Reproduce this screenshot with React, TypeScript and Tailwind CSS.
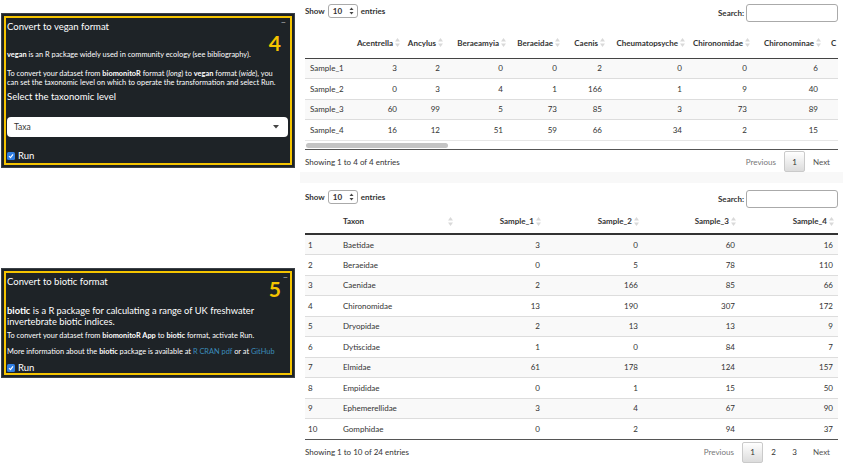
import React from 'react';

const SortIcon = () => (
  <svg width="5" height="9" viewBox="0 0 5 9" className="shrink-0">
    <path d="M2.5 0 L5 3.5 L0 3.5 Z" fill="#d9d9d9" />
    <path d="M0 5.5 L5 5.5 L2.5 9 Z" fill="#d9d9d9" />
  </svg>
);

const Checked = () => (
  <span className="w-[8px] h-[8px] rounded-[1.5px] bg-[#2f7de1] flex items-center justify-center shrink-0">
    <svg width="6" height="6" viewBox="0 0 6 6">
      <path d="M1 3.1 L2.5 4.6 L5 1.4" stroke="white" strokeWidth="1.2" fill="none" />
    </svg>
  </span>
);

const Toolbar = () => (
  <div className="flex justify-between items-start text-[8px] text-[#333]">
    <div className="flex items-center h-[14px] gap-[3px] font-bold">
      <span>Show</span>
      <span className="w-[30px] h-[14px] border border-[#aaa] rounded-[3px] flex items-center justify-between pl-[4px] pr-[3px] bg-white">
        <span>10</span>
        <svg width="5" height="8" viewBox="0 0 5 8">
          <path d="M2.5 0.5 L4.5 3 L0.5 3 Z" fill="#444" />
          <path d="M0.5 5 L4.5 5 L2.5 7.5 Z" fill="#444" />
        </svg>
      </span>
      <span>entries</span>
    </div>
    <div className="flex items-center gap-[2px]">
      <span className="font-bold">Search:</span>
      <span className="w-[92px] h-[18px] border border-[#aaa] rounded-[3px] bg-white" />
    </div>
  </div>
);

const Pager = ({ pages }: { pages: number }) => (
  <div className="flex items-center text-[8px] text-[#555]">
    <span className="px-[8px] text-[#777]">Previous</span>
    <span className="w-[21px] h-[21px] flex items-center justify-center border border-[#cacaca] rounded-[2px] bg-gradient-to-b from-white to-[#dcdcdc] text-[#333]">1</span>
    {pages > 1 && <span className="w-[21px] text-center text-[#333]">2</span>}
    {pages > 2 && <span className="w-[21px] text-center text-[#333]">3</span>}
    <span className="px-[8px]">Next</span>
  </div>
);

const taxaCols = [
  { name: '', w: 'w-[43px]' },
  { name: 'Acentrella', w: 'w-[54px]' },
  { name: 'Ancylus', w: 'w-[43px]' },
  { name: 'Beraeamyia', w: 'w-[63px]' },
  { name: 'Beraeidae', w: 'w-[54px]' },
  { name: 'Caenis', w: 'w-[45px]' },
  { name: 'Cheumatopsyche', w: 'w-[80px]' },
  { name: 'Chironomidae', w: 'w-[65px]' },
  { name: 'Chironominae', w: 'w-[71px]' },
];

const veganRows = [
  ['Sample_1', 3, 2, 0, 0, 2, 0, 0, 6],
  ['Sample_2', 0, 3, 4, 1, 166, 1, 9, 40],
  ['Sample_3', 60, 99, 5, 73, 85, 3, 73, 89],
  ['Sample_4', 16, 12, 51, 59, 66, 34, 2, 15],
];

const bioticCols = [
  { name: '', w: 'w-[33px]' },
  { name: 'Taxon', w: 'w-[119px]' },
  { name: 'Sample_1', w: 'w-[88px]' },
  { name: 'Sample_2', w: 'w-[98px]' },
  { name: 'Sample_3', w: 'w-[97px]' },
  { name: 'Sample_4', w: 'w-[98px]' },
];

const bioticRows: [string, number, number, number, number][] = [
  ['Baetidae', 3, 0, 60, 16],
  ['Beraeidae', 0, 5, 78, 110],
  ['Caenidae', 2, 166, 85, 66],
  ['Chironomidae', 13, 190, 307, 172],
  ['Dryopidae', 2, 13, 13, 9],
  ['Dytiscidae', 1, 0, 84, 7],
  ['Elmidae', 61, 178, 124, 157],
  ['Empididae', 0, 1, 15, 50],
  ['Ephemerellidae', 3, 4, 67, 90],
  ['Gomphidae', 0, 2, 94, 37],
];

export default function App() {
  return (
    <div className="flex w-[843px] h-[463px] overflow-hidden bg-white font-['Lato',sans-serif]">
      {/* left: option boxes */}
      <div className="w-[300px] shrink-0 pl-[1px] pt-[13px]">
        <div className="w-[294px] h-[155px] bg-[#1e2327] border border-[#3b4046] p-[2px]">
          <div className="relative h-full border-2 border-[#f5c400] pl-[1px] pr-[2px] text-white">
            <span className="absolute top-[1px] right-[4px] text-[9px] leading-[8px] text-[#aaa]">−</span>
            <span className="absolute top-[14px] right-[9px] text-[21px] leading-[21px] font-bold text-[#f5c400]">4</span>
            <div className="mt-[3px] text-[9.5px] leading-[12px]">Convert to vegan format</div>
            <p className="mt-[17px] text-[7.4px] leading-[10px]">
              <b>vegan</b> is an R package widely used in community ecology (see bibliography).
            </p>
            <p className="mt-[10px] text-[7.4px] leading-[8.5px]">
              To convert your dataset from <b>biomonitoR</b> format (<i>long</i>) to <b>vegan</b> format (<i>wide</i>), you
              <br />
              can set the taxonomic level on which to operate the transformation and select Run.
            </p>
            <div className="mt-[4px] text-[9.5px] leading-[12px]">Select the taxonomic level</div>
            <div className="mt-[14px] h-[20px] bg-white rounded-[4px] flex items-center justify-between pl-[7px] pr-[9px] text-[#333] text-[8.5px]">
              <span>Taxa</span>
              <svg width="6" height="4" viewBox="0 0 6 4">
                <path d="M0 0 L6 0 L3 3.5 Z" fill="#444" />
              </svg>
            </div>
            <div className="mt-[13px] flex items-center gap-[3px] text-[9.5px] leading-[12px]">
              <Checked />
              <span>Run</span>
            </div>
          </div>
        </div>

        <div className="mt-[100px] w-[294px] h-[110px] bg-[#1e2327] border border-[#3b4046] p-[2px]">
          <div className="relative h-full border-2 border-[#f5c400] pl-[1px] pr-[2px] text-white">
            <span className="absolute top-[1px] right-[2px] text-[9px] leading-[8px] text-[#aaa]">−</span>
            <span className="absolute top-[5px] right-[9px] text-[21px] leading-[21px] font-bold text-[#f5c400]">5</span>
            <div className="mt-[3px] text-[9.5px] leading-[12px]">Convert to biotic format</div>
            <p className="mt-[18px] text-[9.3px] leading-[10.5px]">
              <b>biotic</b> is a R package for calculating a range of UK freshwater
              <br />
              invertebrate biotic indices.
            </p>
            <p className="mt-[4px] text-[7.4px] leading-[10px]">
              To convert your dataset from <b>biomonitoR App</b> to <b>biotic</b> format, activate Run.
            </p>
            <p className="mt-[6px] text-[7.4px] leading-[10px]">
              More information about the <b>biotic</b> package is available at{' '}
              <span className="text-[#3c8dbc]">R CRAN pdf</span> or at <span className="text-[#3c8dbc]">GitHub</span>
            </p>
            <div className="mt-[6px] flex items-center gap-[3px] text-[9.5px] leading-[10px]">
              <Checked />
              <span>Run</span>
            </div>
          </div>
        </div>
      </div>

      {/* right: tables */}
      <div className="flex-1 min-w-0 flex flex-col text-[#333]">
        <div className="px-[5px] pt-[4px]">
          <Toolbar />
          <div className="mt-[6px] w-[533px] overflow-hidden">
            <table className="table-fixed border-collapse w-[598px] text-[8px]">
              <colgroup>
                {taxaCols.map((c, i) => (
                  <col key={i} className={c.w} />
                ))}
                <col className="w-[80px]" />
              </colgroup>
              <thead>
                <tr>
                  {taxaCols.map((c, i) => (
                    <th key={i} className="h-[30px] pl-[5px] pr-[2px] font-bold border-b border-[#444]">
                      {c.name && (
                        <div className="flex items-center justify-end gap-[2px] whitespace-nowrap">
                          <span>{c.name}</span>
                          <SortIcon />
                        </div>
                      )}
                    </th>
                  ))}
                  <th className="h-[30px] pl-[8px] font-bold border-b border-[#444] text-left">C</th>
                </tr>
              </thead>
              <tbody>
                {veganRows.map((r, ri) => (
                  <tr key={ri} className={ri % 2 === 0 ? 'bg-[#f9f9f9]' : 'bg-white'}>
                    {r.map((v, ci) => (
                      <td
                        key={ci}
                        className={`h-[20.5px] px-[5px] border-t border-[#ddd] ${ci === 0 ? 'text-left' : 'text-right'}`}
                      >
                        {v}
                      </td>
                    ))}
                    <td className="border-t border-[#ddd]" />
                  </tr>
                ))}
              </tbody>
            </table>
            <div className="relative h-[10px] border-t border-b border-t-[#e6e6e6] border-b-[#555]">
              <div className="absolute left-[1px] top-[2px] w-[142px] h-[5px] rounded-full bg-[#c4c4c4]" />
            </div>
          </div>
          <div className="mt-[1px] flex items-center justify-between text-[8px]">
            <span>Showing 1 to 4 of 4 entries</span>
            <Pager pages={1} />
          </div>
        </div>

        <div className="h-[11px] bg-[#f8f8f8]" />

        <div className="px-[5px] pt-[7px]">
          <Toolbar />
          <table className="mt-[1px] table-fixed border-collapse w-[533px] text-[8px]">
            <colgroup>
              {bioticCols.map((c, i) => (
                <col key={i} className={c.w} />
              ))}
            </colgroup>
            <thead>
              <tr>
                {bioticCols.map((c, i) => (
                  <th key={i} className="h-[25px] pl-[5px] pr-[4px] font-bold border-b-2 border-[#333]">
                    {c.name && (
                      <div
                        className={`flex items-center gap-[2px] whitespace-nowrap ${
                          i === 1 ? 'justify-between' : 'justify-end'
                        }`}
                      >
                        <span>{c.name}</span>
                        <SortIcon />
                      </div>
                    )}
                  </th>
                ))}
              </tr>
            </thead>
            <tbody>
              {bioticRows.map((r, ri) => (
                <tr key={ri} className={ri % 2 === 0 ? 'bg-[#f9f9f9]' : 'bg-white'}>
                  <td className="h-[20.5px] px-[3px] border-t border-[#ddd] text-left">{ri + 1}</td>
                  <td className="px-[5px] border-t border-[#ddd] text-left">{r[0]}</td>
                  {r.slice(1).map((v, ci) => (
                    <td key={ci} className="px-[5px] border-t border-[#ddd] text-right">
                      {v}
                    </td>
                  ))}
                </tr>
              ))}
              <tr>
                <td colSpan={6} className="h-0 p-0 border-t border-[#555]" />
              </tr>
            </tbody>
          </table>
          <div className="mt-[2px] flex items-center justify-between text-[8px]">
            <span>Showing 1 to 10 of 24 entries</span>
            <Pager pages={3} />
          </div>
        </div>
      </div>
    </div>
  );
}
